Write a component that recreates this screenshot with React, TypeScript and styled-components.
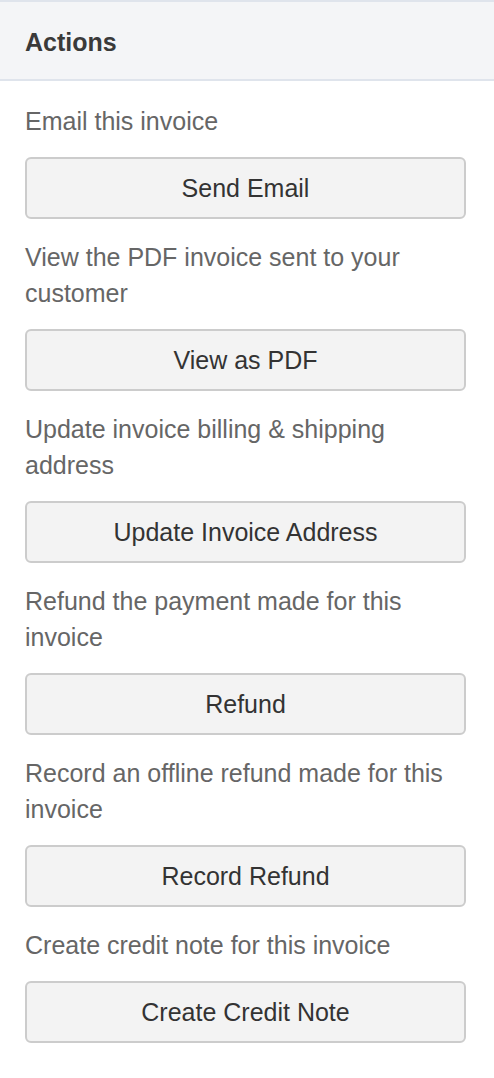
import { createGlobalStyle, styled } from "styled-components";

const GlobalStyle = createGlobalStyle`
  html, body {
    margin: 0;
    padding: 0;
    background: #ffffff;
  }
  body {
    font-family: "Liberation Sans", Arial, sans-serif;
    -webkit-font-smoothing: antialiased;
  }
`;

const Panel = styled.section`
  width: 494px;
  background: #ffffff;
`;

const Header = styled.header`
  height: 81px;
  box-sizing: border-box;
  display: flex;
  align-items: center;
  padding: 4px 25px 0;
  background: #f4f5f7;
  border-top: 2px solid #dfe4ec;
  border-bottom: 2px solid #dfe4ec;
`;

const Title = styled.h2`
  margin: 0;
  font-size: 25px;
  font-weight: 700;
  color: #3a3a3a;
`;

const Body = styled.div`
  display: flex;
  flex-direction: column;
  padding: 22px 28px 0 25px;
`;

const Action = styled.div`
  display: flex;
  flex-direction: column;
  gap: 18px;
  margin-bottom: 20px;
`;

const Description = styled.p`
  margin: 0;
  font-size: 25px;
  line-height: 36px;
  color: #666666;
`;

const Button = styled.button`
  height: 62px;
  width: 100%;
  border: 2px solid #cccccc;
  border-radius: 6px;
  background: #f3f3f3;
  font-family: inherit;
  font-size: 25px;
  color: #333333;
  cursor: pointer;
`;

const actions = [
  { text: "Email this invoice", label: "Send Email" },
  { text: "View the PDF invoice sent to your customer", label: "View as PDF" },
  { text: "Update invoice billing & shipping address", label: "Update Invoice Address" },
  { text: "Refund the payment made for this invoice", label: "Refund" },
  { text: "Record an offline refund made for this invoice", label: "Record Refund" },
  { text: "Create credit note for this invoice", label: "Create Credit Note" },
];

export default function App() {
  return (
    <>
      <GlobalStyle />
      <Panel>
        <Header>
          <Title>Actions</Title>
        </Header>
        <Body>
          {actions.map((a) => (
            <Action key={a.label}>
              <Description>{a.text}</Description>
              <Button>{a.label}</Button>
            </Action>
          ))}
        </Body>
      </Panel>
    </>
  );
}
